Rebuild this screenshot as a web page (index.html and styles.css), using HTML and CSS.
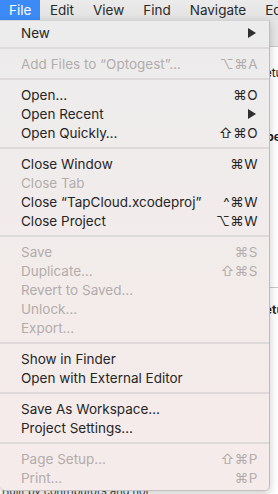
FILE: index.html
```html
<!DOCTYPE html>
<html lang="en">
<head>
    <meta charset="UTF-8">
    <meta name="viewport" content="width=device-width, initial-scale=1.0">
    <title>File Menu</title>
    <link rel="stylesheet" href="styles.css">
</head>
<body>
    <div class="screen">
        <div class="menubar">
            <span class="menu-title active">File</span>
            <span class="menu-title">Edit</span>
            <span class="menu-title">View</span>
            <span class="menu-title">Find</span>
            <span class="menu-title">Navigate</span>
            <span class="menu-title">Editor</span>
        </div>

        <div class="desktop">
            <div class="app">
                <div class="app-toolbar"></div>
                <div class="app-body">
                    <div class="app-line">Setup</div>
                    <div class="app-line caret">|</div>
                    <div class="app-line strong">Open</div>
                    <div class="app-rule"></div>
                    <div class="app-line strong">Setup</div>
                </div>
                <div class="app-footer">
                    <span>Built by contributors and not</span>
                </div>
            </div>

            <div class="dropdown">
                <div class="item"><span>New</span><span class="arrow"></span></div>
                <div class="sep"></div>
                <div class="item disabled"><span>Add Files to “Optogest”…</span><span class="key">⌥⌘A</span></div>
                <div class="sep"></div>
                <div class="item"><span>Open…</span><span class="key">⌘O</span></div>
                <div class="item"><span>Open Recent</span><span class="arrow"></span></div>
                <div class="item"><span>Open Quickly…</span><span class="key">⇧⌘O</span></div>
                <div class="sep"></div>
                <div class="item"><span>Close Window</span><span class="key">⌘W</span></div>
                <div class="item disabled"><span>Close Tab</span></div>
                <div class="item"><span>Close “TapCloud.xcodeproj”</span><span class="key">^⌘W</span></div>
                <div class="item"><span>Close Project</span><span class="key">⌥⌘W</span></div>
                <div class="sep"></div>
                <div class="item disabled"><span>Save</span><span class="key">⌘S</span></div>
                <div class="item disabled"><span>Duplicate…</span><span class="key">⇧⌘S</span></div>
                <div class="item disabled"><span>Revert to Saved…</span></div>
                <div class="item disabled"><span>Unlock…</span></div>
                <div class="item disabled"><span>Export…</span></div>
                <div class="sep"></div>
                <div class="item"><span>Show in Finder</span></div>
                <div class="item"><span>Open with External Editor</span></div>
                <div class="sep"></div>
                <div class="item"><span>Save As Workspace…</span></div>
                <div class="item"><span>Project Settings…</span></div>
                <div class="sep"></div>
                <div class="item disabled"><span>Page Setup…</span><span class="key">⇧⌘P</span></div>
                <div class="item disabled"><span>Print…</span><span class="key">⌘P</span></div>
            </div>
        </div>
    </div>
</body>
</html>
```

FILE: styles.css
```css
* {
    box-sizing: border-box;
}

body {
    margin: 0;
    font-family: Inter, "Liberation Sans", "DejaVu Sans", sans-serif;
    color: #262626;
    background: #fff;
    overflow: hidden;
}

.screen {
    width: 278px;
    height: 494px;
    display: flex;
    flex-direction: column;
}

.menubar {
    height: 20px;
    flex: none;
    display: flex;
    align-items: stretch;
    background: linear-gradient(#ebebeb, #e2e2e2);
    font-size: 13.5px;
    white-space: nowrap;
    overflow: hidden;
}

.menu-title {
    display: flex;
    align-items: center;
    padding: 0 9.5px;
    color: #2a2a2a;
}

.menu-title.active {
    padding: 0 9px;
    background: #3b8af6;
    color: #fff;
}

.desktop {
    position: relative;
    flex: 1;
}

/* the window behind the menu */
.app {
    height: 100%;
    display: flex;
    flex-direction: column;
    font-size: 12px;
}

.app-toolbar {
    height: 27px;
    background: #e6e6e6;
    border-bottom: 1px solid #c8c8c8;
}

.app-body {
    flex: 1;
    padding: 18px 0 0 257px;
    white-space: nowrap;
}

.app-line {
    height: 32px;
    color: #222;
}

.app-line.caret {
    color: #3b8af6;
}

.app-line.strong {
    font-weight: 700;
}

.app-rule {
    height: 1px;
    margin: 126px 0 14px -60px;
    background: #c9c9c9;
}

.app-footer {
    height: 6px;
    padding-left: 2px;
    font-size: 11px;
    line-height: 6px;
    overflow: hidden;
    color: #444;
}

/* dropdown menu */
.dropdown {
    position: absolute;
    top: 0;
    left: 0;
    width: 270px;
    padding: 2px 0 3px;
    background: linear-gradient(#ececec, #f1eceb 40%, #f5ebea);
    border-top: 1px solid #d4d4d4;
    border-right: 1px solid #bdbdbd;
    border-bottom: 1px solid #c6c2c2;
    border-radius: 0 0 5px 5px;
    box-shadow: 0 3px 8px rgba(0, 0, 0, 0.2);
    font-size: 13.5px;
}

.item {
    height: 19px;
    display: flex;
    align-items: center;
    justify-content: space-between;
    padding: 0 11px 0 21px;
    white-space: nowrap;
}

.item.disabled {
    color: #b3acab;
}

.key {
    font-family: Inter, "DejaVu Sans", sans-serif;
    letter-spacing: 0.5px;
}

.arrow {
    width: 0;
    height: 0;
    margin-right: 2px;
    border-top: 5px solid transparent;
    border-bottom: 5px solid transparent;
    border-left: 8px solid #2f2f2f;
}

.sep {
    height: 2px;
    margin: 5px 0;
    background: #dedad9;
}
```
